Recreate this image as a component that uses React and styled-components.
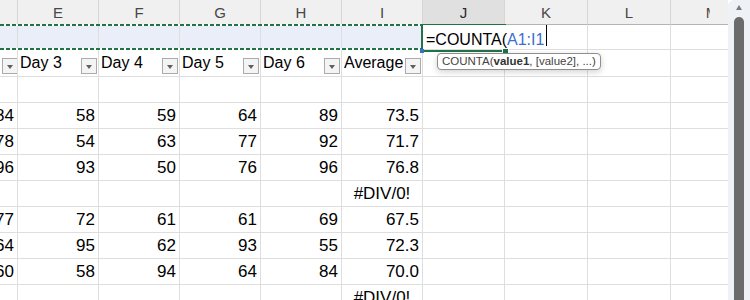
import React from "react";
import styled, { createGlobalStyle } from "styled-components";

const GRID = "#dedede";
const GREEN = "#217346";
const BLUE = "#3a6fd0";

const Global = createGlobalStyle`
  html, body { margin: 0; padding: 0; background: #fff; overflow: hidden; }
  body { font-family: "Liberation Sans", Arial, sans-serif; }
`;

const Window = styled.div`
  width: 750px;
  height: 300px;
  display: flex;
  overflow: hidden;
  background: #fff;
`;

const Viewport = styled.div`
  width: 728px;
  height: 300px;
  flex: none;
  overflow: hidden;
`;

const Sheet = styled.div`
  display: grid;
  grid-template-columns: 18px 81px 81px 81px 81px 81px 82px 83px 83px 83px;
  grid-template-rows: 25px 25px 27px repeat(9, 26px);
  width: max-content;
`;

const ColHeader = styled.div`
  grid-row: 1;
  grid-column: ${(p) => p.$col};
  display: flex;
  align-items: center;
  justify-content: center;
  background: ${(p) => (p.$active ? "#e0e0e0" : "#f0f0f0")};
  border-right: 1px solid #d6d6d6;
  border-bottom: 1px solid #b4b4b4;
  font-size: 15px;
  color: ${(p) => (p.$active ? "#2b2b2b" : "#474747")};
`;

const ClippedLetter = styled.span`
  clip-path: inset(0 8.5px 0 0);
`;

const Cell = styled.div`
  grid-row: ${(p) => p.$row};
  grid-column: ${(p) => p.$col};
  display: flex;
  align-items: center;
  justify-content: ${(p) =>
    p.$align === "right" ? "flex-end" : p.$align === "center" ? "center" : "flex-start"};
  min-width: 0;
  overflow: hidden;
  white-space: nowrap;
  padding: 0 3px 0 3px;
  border-right: 1px solid ${GRID};
  border-bottom: 1px solid ${GRID};
  background: ${(p) => (p.$band ? "#e9eef8" : "#fff")};
  font-size: 17px;
  color: #000;
`;

const FieldCell = styled.div`
  grid-row: 3;
  grid-column: ${(p) => p.$col};
  display: flex;
  align-items: center;
  justify-content: space-between;
  min-width: 0;
  overflow: hidden;
  white-space: nowrap;
  padding: 0 1px 0 2px;
  border-right: 1px solid ${GRID};
  border-bottom: 1px solid ${GRID};
  background: #fff;
  font-size: 16px;
  color: #000;
`;

const FieldLabel = styled.span`
  min-width: 0;
  overflow: hidden;
`;

const FilterButton = styled.span`
  flex: none;
  align-self: flex-end;
  margin-bottom: 2px;
  width: 16px;
  height: 16px;
  box-sizing: border-box;
  border: 1px solid #ababab;
  background: #f4f4f4;
  display: flex;
  align-items: center;
  justify-content: center;
  padding-top: 1px;

  &::after {
    content: "";
    width: 0;
    height: 0;
    border-left: 3.5px solid transparent;
    border-right: 3.5px solid transparent;
    border-top: 4px solid #5f5f5f;
  }
`;

const Marquee = styled.div`
  grid-column: 1 / 7;
  grid-row: 2;
  margin-top: -1px;
  position: relative;
  z-index: 4;
  background-image: repeating-linear-gradient(90deg, ${GREEN} 0 4px, #ffffff 4px 6px),
    repeating-linear-gradient(90deg, ${GREEN} 0 4px, #ffffff 4px 6px);
  background-size: 100% 2px, 100% 2px;
  background-position: left top, left bottom;
  background-repeat: no-repeat;
`;

const RangeHandle = styled.span`
  position: absolute;
  right: -1px;
  bottom: -3px;
  width: 4px;
  height: 4px;
  background: ${BLUE};
`;

const Editor = styled.div`
  grid-column: 7 / 9;
  grid-row: 2;
  position: relative;
  z-index: 5;
  margin-right: 1px;
  margin-bottom: 1px;
  background: #fff;
  display: flex;
  align-items: flex-end;
  padding-left: 3px;
  font-size: 16px;
  line-height: 18px;
  color: #000;
  white-space: nowrap;
`;

const RefText = styled.span`
  color: ${BLUE};
`;

const Caret = styled.span`
  align-self: flex-start;
  width: 1px;
  height: 21px;
  margin-left: 2px;
  background: #000;
`;

const Tooltip = styled.div`
  position: absolute;
  left: 14px;
  top: 28px;
  height: 17px;
  box-sizing: border-box;
  padding: 0 4px;
  display: flex;
  align-items: center;
  border: 1px solid #8e8e8e;
  border-radius: 4px;
  background: #fff;
  box-shadow: 0 2px 6px rgba(0, 0, 0, 0.18);
  font-size: 11.5px;
  line-height: 15px;
  color: #444;
  white-space: nowrap;

  b {
    font-weight: bold;
    color: #333;
  }
`;

const ActiveCell = styled.div`
  grid-column: 7;
  grid-row: 2;
  position: relative;
  z-index: 3;
  margin: -1px -1px -2px -2px;
  border: 2px solid ${GREEN};
  pointer-events: none;
`;

const FillHandle = styled.span`
  position: absolute;
  right: -5px;
  bottom: -5px;
  width: 5px;
  height: 5px;
  background: ${GREEN};
  border: 1px solid #fff;
`;

const Scrollbar = styled.div`
  flex: 1;
  background: #eef1f5;
  border-top-left-radius: 6px;
  display: flex;
  flex-direction: column;
  align-items: center;
  padding-top: 5px;
  gap: 7px;
`;

const ArrowUp = styled.span`
  width: 0;
  height: 0;
  border-left: 3.5px solid transparent;
  border-right: 3.5px solid transparent;
  border-bottom: 5px solid #7b7b7b;
`;

const Thumb = styled.div`
  width: 10px;
  flex: 1;
  background: #6b6b6b;
  border-radius: 5px 5px 0 0;
`;

const columns = ["D", "E", "F", "G", "H", "I", "J", "K", "L", "M"];
const fields = ["", "Day 3", "Day 4", "Day 5", "Day 6", "Average"];

const dataRows = [
  [],
  ["84", "58", "59", "64", "89", "73.5"],
  ["78", "54", "63", "77", "92", "71.7"],
  ["96", "93", "50", "76", "96", "76.8"],
  ["", "", "", "", "", "#DIV/0!"],
  ["77", "72", "61", "61", "69", "67.5"],
  ["64", "95", "62", "93", "55", "72.3"],
  ["60", "58", "94", "64", "84", "70.0"],
  ["", "", "", "", "", "#DIV/0!"],
];

export default function App() {
  return (
    <>
      <Global />
      <Window>
        <Viewport>
          <Sheet>
            {columns.map((c, i) => (
              <ColHeader key={`h-${c}`} $col={i + 1} $active={c === "J"}>
                {c === "D" ? "" : c === "M" ? <ClippedLetter>M</ClippedLetter> : c}
              </ColHeader>
            ))}

            {columns.map((c, i) => (
              <Cell key={`r1-${c}`} $row={2} $col={i + 1} $band={i < 6} />
            ))}

            {columns.map((c, i) =>
              i < 6 ? (
                <FieldCell key={`r2-${c}`} $col={i + 1}>
                  <FieldLabel>{fields[i]}</FieldLabel>
                  <FilterButton />
                </FieldCell>
              ) : (
                <Cell key={`r2-${c}`} $row={3} $col={i + 1} />
              )
            )}

            {dataRows.map((row, r) =>
              columns.map((c, i) => {
                const v = row[i] || "";
                return (
                  <Cell
                    key={`d${r}-${c}`}
                    $row={r + 4}
                    $col={i + 1}
                    $align={v.startsWith("#") ? "center" : "right"}
                  >
                    {v}
                  </Cell>
                );
              })
            )}

            <Marquee>
              <RangeHandle />
            </Marquee>
            <ActiveCell>
              <FillHandle />
            </ActiveCell>
            <Editor>
              <span>
                =COUNTA(<RefText>A1:I1</RefText>
              </span>
              <Caret />
              <Tooltip>
                COUNTA(<b>value1</b>, [value2], ...)
              </Tooltip>
            </Editor>
          </Sheet>
        </Viewport>
        <Scrollbar>
          <ArrowUp />
          <Thumb />
        </Scrollbar>
      </Window>
    </>
  );
}
